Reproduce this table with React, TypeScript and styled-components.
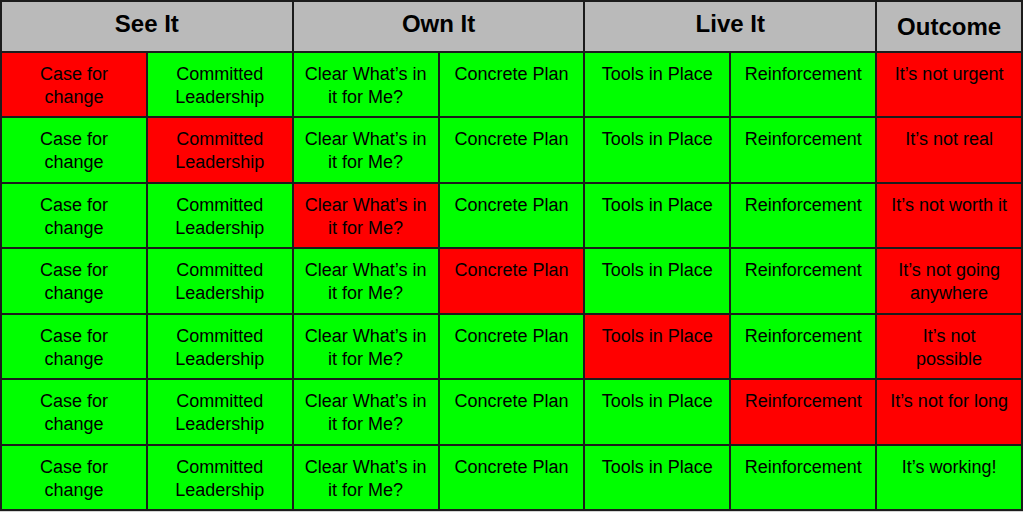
import { Fragment } from "react";
import styled, { createGlobalStyle } from "styled-components";

const GlobalStyle = createGlobalStyle`
  html, body {
    margin: 0;
    padding: 0;
    background: #ffffff;
  }
  body {
    font-family: "Liberation Sans", Arial, sans-serif;
    color: #000;
  }
`;

const Table = styled.div`
  width: 1023px;
  height: 512px;
  box-sizing: border-box;
  padding: 2px;
  display: grid;
  grid-template-columns: repeat(7, 1fr);
  grid-template-rows: 49px repeat(7, 1fr);
  gap: 2px;
  background: #1c1c1c;
  border-bottom: 1px solid #d4d4d4;
`;

const HeaderCell = styled.div<{ $span: number; $lift?: boolean }>`
  grid-column: span ${(p) => p.$span};
  background: #bababa;
  display: flex;
  align-items: center;
  justify-content: center;
  font-weight: bold;
  font-size: 24px;
  padding-bottom: ${(p) => (p.$lift ? "6px" : "0")};
`;

const Cell = styled.div<{ $bad: boolean }>`
  background: ${(p) => (p.$bad ? "#ff0000" : "#00ff00")};
  font-size: 18px;
  line-height: 23px;
  text-align: center;
  padding: 10px 6px 0;
  box-sizing: border-box;
  overflow: hidden;
`;

const steps = [
  ["Case for", "change"],
  ["Committed", "Leadership"],
  ["Clear What\u2019s in", "it for Me?"],
  ["Concrete Plan"],
  ["Tools in Place"],
  ["Reinforcement"],
];

const outcomes = [
  ["It\u2019s not urgent"],
  ["It\u2019s not real"],
  ["It\u2019s not worth it"],
  ["It\u2019s not going", "anywhere"],
  ["It\u2019s not", "possible"],
  ["It\u2019s not for long"],
  ["It\u2019s working!"],
];

const Lines = ({ lines }: { lines: string[] }) => (
  <>
    {lines.map((l, i) => (
      <div key={i}>{l}</div>
    ))}
  </>
);

const App = () => {
  return (
    <>
      <GlobalStyle />
      <Table>
        <HeaderCell $span={2} $lift>See It</HeaderCell>
        <HeaderCell $span={2} $lift>Own It</HeaderCell>
        <HeaderCell $span={2} $lift>Live It</HeaderCell>
        <HeaderCell $span={1}>Outcome</HeaderCell>

        {outcomes.map((outcome, row) => (
          <Fragment key={row}>
            {steps.map((step, col) => (
              <Cell key={col} $bad={row === col}>
                <Lines lines={step} />
              </Cell>
            ))}
            <Cell $bad={row < 6}>
              <Lines lines={outcome} />
            </Cell>
          </Fragment>
        ))}
      </Table>
    </>
  );
};

export default App;
